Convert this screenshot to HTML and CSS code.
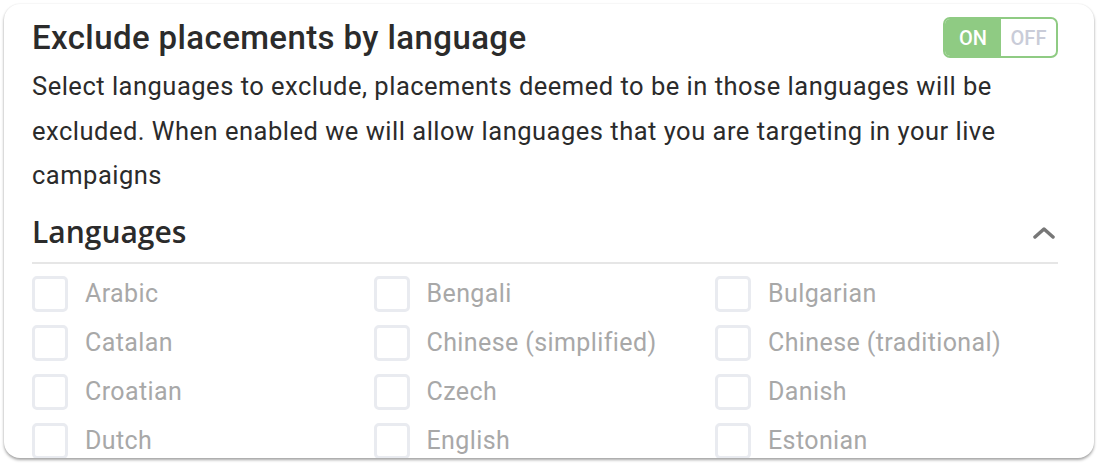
FILE: index.html
```html
<!DOCTYPE html>
<html>
<head>
<meta charset="utf-8">
<link rel="stylesheet" href="styles.css">
</head>
<body>
<div class="card">
  <div class="header">
    <h1 class="title">Exclude placements by language</h1>
    <div class="toggle"><span class="on">ON</span><span class="off">OFF</span></div>
  </div>
  <p class="desc">Select languages to exclude, placements deemed to be in those languages will be excluded. When enabled we will allow languages that you are targeting in your live campaigns</p>
  <div class="section-head">
    <h2 class="section-title">Languages</h2>
    <svg class="chev" width="24" height="14" viewBox="0 0 24 14"><path d="M3 12 L12 4 L21 12" fill="none" stroke="#777" stroke-width="3.5" stroke-linecap="round" stroke-linejoin="round"/></svg>
  </div>
  <div class="grid">
    <label class="item"><span class="box"></span>Arabic</label>
    <label class="item"><span class="box"></span>Bengali</label>
    <label class="item"><span class="box"></span>Bulgarian</label>
    <label class="item"><span class="box"></span>Catalan</label>
    <label class="item"><span class="box"></span>Chinese (simplified)</label>
    <label class="item"><span class="box"></span>Chinese (traditional)</label>
    <label class="item"><span class="box"></span>Croatian</label>
    <label class="item"><span class="box"></span>Czech</label>
    <label class="item"><span class="box"></span>Danish</label>
    <label class="item"><span class="box"></span>Dutch</label>
    <label class="item"><span class="box"></span>English</label>
    <label class="item"><span class="box"></span>Estonian</label>
  </div>
</div>
</body>
</html>
```
FILE: styles.css
```css
html, body { margin: 0; padding: 0; background: #fff; }
body { width: 1100px; height: 466px; overflow: hidden; font-family: Roboto, "Liberation Sans", sans-serif; }
.card {
  margin: 4px 0 0 4px;
  width: 1090px;
  height: 454px;
  box-sizing: border-box;
  padding: 14px 40px 0 28px;
  border-radius: 16px;
  background: #fff;
  box-shadow: 0 2px 3px rgba(0,0,0,0.35), 0 0 2px rgba(0,0,0,0.08);
  overflow: hidden;
}
.header { display: flex; justify-content: space-between; align-items: flex-start; }
.title { margin: 0; font-size: 33px; font-weight: 500; color: #2b2b2b; line-height: 40px; letter-spacing: 0.4px; }
.toggle {
  display: flex; margin-top: -1px; margin-right: -4px;
  width: 115px; height: 41px; box-sizing: border-box;
  border: 2px solid #8fcb83; border-radius: 7px; overflow: hidden;
  font-size: 20px; font-weight: 500;
}
.toggle .on { width: 56px; background: #8fcb83; color: #fff; display: flex; align-items: center; justify-content: center; }
.toggle .off { flex: 1; color: #c9ccd8; display: flex; align-items: center; justify-content: center; }
.desc { margin: 6px 0 0; font-size: 25.5px; line-height: 44.5px; color: #2b2b2b; letter-spacing: 0.5px; }
.section-head {
  display: flex; justify-content: space-between; align-items: center;
  margin-top: 14px; padding-bottom: 10px; border-bottom: 2px solid #e6e6e6;
  margin-right: -4px;
}
.section-title { margin: 0; font-family: "Open Sans", sans-serif; font-size: 30px; font-weight: 600; color: #2b2b2b; line-height: 40px; }
.chev { margin-right: 2px; }
.grid { display: grid; grid-template-columns: 341.5px 341.5px 1fr; row-gap: 13px; padding-top: 12px; }
.item { display: flex; align-items: center; gap: 17px; font-size: 25px; letter-spacing: 0.4px; color: #a8a8a8; height: 36px; }
.box { width: 36px; height: 36px; box-sizing: border-box; border: 3px solid #e9ebf0; border-radius: 5px; flex: none; }
```
